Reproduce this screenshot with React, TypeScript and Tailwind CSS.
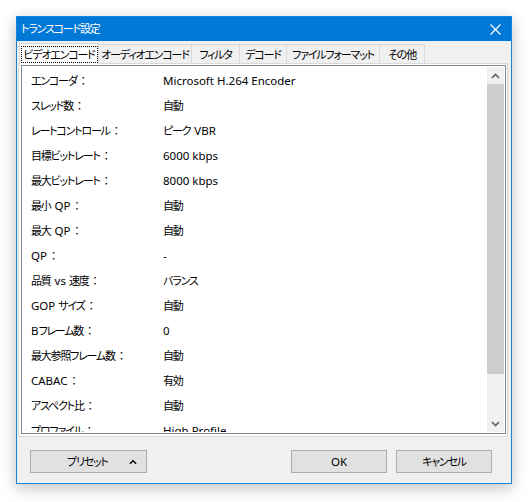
import React from "react";

const rows: [string, string][] = [
  ["エンコーダ：", "Microsoft H.264 Encoder"],
  ["スレッド数：", "自動"],
  ["レートコントロール：", "ピーク VBR"],
  ["目標ビットレート：", "6000 kbps"],
  ["最大ビットレート：", "8000 kbps"],
  ["最小 QP：", "自動"],
  ["最大 QP：", "自動"],
  ["QP：", "-"],
  ["品質 vs 速度：", "バランス"],
  ["GOP サイズ：", "自動"],
  ["Bフレーム数：", "0"],
  ["最大参照フレーム数：", "自動"],
  ["CABAC：", "有効"],
  ["アスペクト比：", "自動"],
  ["プロファイル：", "High Profile"],
];

const tabs: [string, string][] = [
  ["オーディオエンコード", "w-[93px]"],
  ["フィルタ", "w-[48px]"],
  ["デコード", "w-[47px]"],
  ["ファイルフォーマット", "w-[93px]"],
  ["その他", "w-[45px]"],
];

// splits mixed text so kana/kanji get the narrow Meiryo-ish look
function J({ text }: { text: string }) {
  const parts = text.split(/([\u3000-\u9fff\uff00-\uffef]+)/).filter((p) => p);
  return (
    <>
      {parts.map((p, i) => {
        if (!/[\u3000-\u9fff\uff00-\uffef]/.test(p)) {
          const lead = p.startsWith(" ") && i > 0;
          return (
            <span key={i} className={lead ? "whitespace-pre ml-[1px]" : "whitespace-pre"}>
              {p}
            </span>
          );
        }
        const colon = p.endsWith("：");
        const body = colon ? p.slice(0, -1) : p;
        return (
          <React.Fragment key={i}>
            {body && (
              <span className="text-[11px] tracking-[-1.2px] [font-feature-settings:'palt']">{body}</span>
            )}
            {colon && <span className="text-[11px] ml-[1px]">：</span>}
          </React.Fragment>
        );
      })}
    </>
  );
}

function Chevron({ up, className }: { up?: boolean; className?: string }) {
  return (
    <svg width="9" height="6" viewBox="0 0 9 6" className={className}>
      <path
        d={up ? "M1 5 L4.5 1.5 L8 5" : "M1 1 L4.5 4.5 L8 1"}
        fill="none"
        stroke="currentColor"
        strokeWidth="1.6"
      />
    </svg>
  );
}

export default function App() {
  return (
    <div
      className="w-[530px] h-[502px] bg-white pl-[16px] pt-[16px] text-[11.5px] text-black whitespace-nowrap"
      style={{ fontFamily: '"Noto Sans", "Noto Sans CJK JP", sans-serif' }}
    >
      <div className="w-[496px] h-[468px] border border-[#1a84d8] bg-[#f0f0f0] flex flex-col shadow-[0_4px_14px_rgba(0,0,0,0.25)]">
        {/* title bar */}
        <div className="h-[24px] bg-[#0078d7] flex items-center justify-between pl-[4px] pr-[10px] text-white">
          <span className="leading-none">
            <J text="トランスコード設定" />
          </span>
          <svg width="11" height="11" viewBox="0 0 11 11">
            <path d="M0.5 0.5 L10.5 10.5 M10.5 0.5 L0.5 10.5" stroke="white" strokeWidth="1.2" />
          </svg>
        </div>

        {/* tabs */}
        <div className="flex items-end pl-[2px] pt-[2px] h-[23px]">
          <div className="h-[21px] w-[80px] bg-white border border-b-0 border-[#d9d9d9] flex items-center justify-center relative z-10">
            <span className="border border-dotted border-black w-[77px] h-[17px] flex items-center justify-center leading-none">
              <J text="ビデオエンコード" />
            </span>
          </div>
          {tabs.map(([t, w]) => (
            <div
              key={t}
              className={`${w} h-[20px] bg-[#f0f0f0] border border-l-0 border-b-0 border-[#d9d9d9] flex items-center justify-center leading-none`}
            >
              <J text={t} />
            </div>
          ))}
        </div>

        {/* panel */}
        <div className="ml-[1px] mr-[3px] h-[374px] bg-white border border-[#d9d9d9] pl-[2px] pr-[1px] pt-[1px] pb-[2px] -mt-[1px]">
          <div className="h-full border border-[#828790] p-[1px] flex">
            <div className="flex-1 overflow-hidden pt-[1px]">
              {rows.map(([k, v]) => (
                <div key={k} className="h-[25px] flex items-center pl-[8px]">
                  <span className="w-[132px] shrink-0">
                    <J text={k} />
                  </span>
                  <span>
                    <J text={v} />
                  </span>
                </div>
              ))}
            </div>
            <div className="w-[17px] bg-[#f0f0f0] flex flex-col">
              <div className="h-[17px] flex items-center justify-center text-[#606060]">
                <Chevron up />
              </div>
              <div className="h-[290px] bg-[#cdcdcd]" />
              <div className="flex-1" />
              <div className="h-[17px] flex items-center justify-center text-[#606060]">
                <Chevron />
              </div>
            </div>
          </div>
        </div>

        {/* footer */}
        <div className="flex items-center pl-[13px] pr-[19px] pt-[13px]">
          <button className="w-[117px] h-[23px] bg-[#e1e1e1] border border-[#adadad] flex items-center pl-[36px] pr-[9px] justify-between">
            <span>
              <J text="プリセット" />
            </span>
            <Chevron up className="w-[8px]" />
          </button>
          <div className="flex-1" />
          <button className="w-[96px] h-[23px] bg-[#e1e1e1] border border-[#adadad] mr-[9px]">OK</button>
          <button className="w-[96px] h-[23px] bg-[#e1e1e1] border border-[#adadad]">
            <J text="キャンセル" />
          </button>
        </div>
      </div>
    </div>
  );
}
